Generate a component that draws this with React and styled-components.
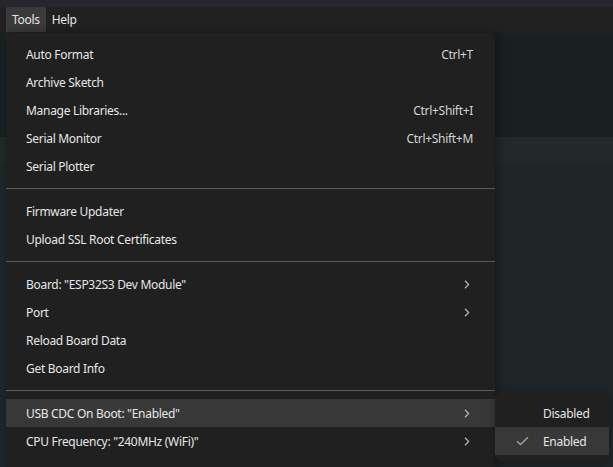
import React from "react";
import styled, { createGlobalStyle } from "styled-components";

const Global = createGlobalStyle`
  html, body { margin: 0; padding: 0; background: #1b2023; overflow: hidden; }
  body { font-family: "Segoe UI", "Noto Sans", "Open Sans", sans-serif; font-size: 12px; letter-spacing: -0.3px; color: #e4e4e4; }
  #root { width: 613px; height: 467px; }
`;

const Page = styled.div`
  position: relative;
  width: 613px;
  height: 467px;
  display: flex;
  flex-direction: column;
`;

const MenuBar = styled.div`
  height: 33px;
  flex: none;
  display: flex;
  align-items: flex-end;
  padding: 0 0 1px 6px;
  box-sizing: border-box;
  background: linear-gradient(#26272b 0 7px, #212121 7px);
`;

const BarItem = styled.div`
  height: 25px;
  display: flex;
  align-items: center;
  padding: 0 6px;
  color: #e6e6e6;
  background: ${(p) => (p.$active ? "#3a3a3a" : "transparent")};
  border-radius: 2px 2px 0 0;
`;

const Workspace = styled.div`
  flex: 1;
  display: flex;
  flex-direction: column;
`;

const Band = styled.div`
  height: ${(p) => p.$h};
  flex: ${(p) => (p.$grow ? 1 : "none")};
  background: ${(p) => p.$bg};
`;

const Menu = styled.div`
  position: absolute;
  left: 6px;
  top: 33px;
  width: 489px;
  padding: 7px 0 14px;
  background: #202020;
  border-radius: 0 5px 0 0;
  box-shadow: 3px 0 8px rgba(0, 0, 0, 0.35);
`;

const Item = styled.div`
  height: 28px;
  display: flex;
  align-items: center;
  padding: 0 22px 0 20px;
  background: ${(p) => (p.$hl ? "#383838" : "transparent")};
  color: #e6e6e6;
`;

const Label = styled.span`
  flex: 1;
`;

const Shortcut = styled.span`
  color: #d4d4d4;
`;

const Chevron = styled.svg`
  width: 6px;
  height: 9px;
  margin-right: 3px;
`;

const Separator = styled.div`
  height: 1px;
  margin: 8px 0 8px;
  background: #5a5a5a;
`;

const SubMenu = styled.div`
  position: absolute;
  left: 495px;
  top: 391px;
  width: 114px;
  padding: 8px 0 7px;
  background: #202020;
  border-radius: 8px;
  box-shadow: 0 2px 8px rgba(0, 0, 0, 0.3);
`;

const SubItem = styled.div`
  height: 28px;
  display: flex;
  align-items: center;
  background: ${(p) => (p.$hl ? "#383838" : "transparent")};
  color: #e6e6e6;
`;

const CheckSlot = styled.div`
  width: 48px;
  display: flex;
  justify-content: flex-end;
  padding-right: 14px;
  box-sizing: border-box;
`;

const ChevronIcon = () => (
  <Chevron viewBox="0 0 6 9">
    <path d="M1 0.8 L4.6 4.5 L1 8.2" fill="none" stroke="#b0b0b0" strokeWidth="1.3" />
  </Chevron>
);

const Check = () => (
  <svg width="13" height="10" viewBox="0 0 13 10">
    <path d="M1 5.2 L4.5 8.6 L12 1.2" fill="none" stroke="#a0a0a0" strokeWidth="1.4" />
  </svg>
);

const groups = [
  [
    { label: "Auto Format", sc: "Ctrl+T" },
    { label: "Archive Sketch" },
    { label: "Manage Libraries...", sc: "Ctrl+Shift+I" },
    { label: "Serial Monitor", sc: "Ctrl+Shift+M" },
    { label: "Serial Plotter" },
  ],
  [{ label: "Firmware Updater" }, { label: "Upload SSL Root Certificates" }],
  [
    { label: 'Board: "ESP32S3 Dev Module"', sub: true },
    { label: "Port", sub: true },
    { label: "Reload Board Data" },
    { label: "Get Board Info" },
  ],
  [
    { label: 'USB CDC On Boot: "Enabled"', sub: true, hl: true },
    { label: 'CPU Frequency: "240MHz (WiFi)"', sub: true },
  ],
];

export default function App() {
  return (
    <Page>
      <Global />
      <MenuBar>
        <BarItem $active>Tools</BarItem>
        <BarItem>Help</BarItem>
      </MenuBar>
      <Workspace>
        <Band $h="104px" $bg="#1a1f22" />
        <Band $h="26px" $bg="#232829" />
        <Band $grow $bg="#202628" />
      </Workspace>
      <Menu>
        {groups.map((g, gi) => (
          <React.Fragment key={gi}>
            {gi > 0 && <Separator />}
            {g.map((it) => (
              <Item key={it.label} $hl={it.hl}>
                <Label>{it.label}</Label>
                {it.sc && <Shortcut>{it.sc}</Shortcut>}
                {it.sub && <ChevronIcon />}
              </Item>
            ))}
          </React.Fragment>
        ))}
      </Menu>
      <SubMenu>
        <SubItem>
          <CheckSlot />
          Disabled
        </SubItem>
        <SubItem $hl>
          <CheckSlot>
            <Check />
          </CheckSlot>
          Enabled
        </SubItem>
      </SubMenu>
    </Page>
  );
}
